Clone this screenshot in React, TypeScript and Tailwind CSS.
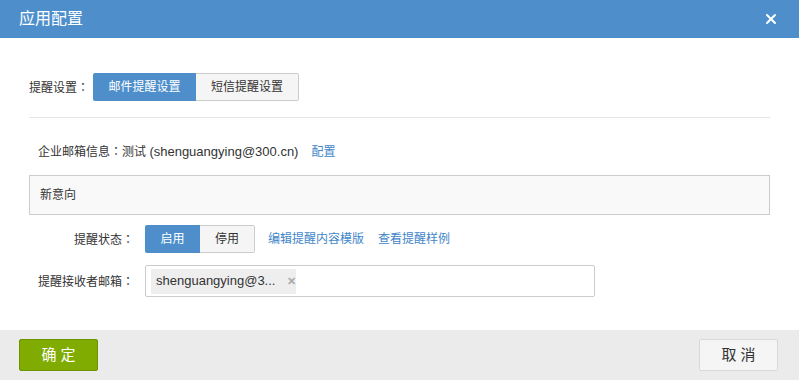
import { X } from "lucide-react";

const font = { fontFamily: '"Liberation Sans", "Noto Sans CJK SC", sans-serif' };

function Colon() {
  return <span style={{ fontFamily: '"Noto Sans CJK TC", sans-serif' }}>：</span>;
}

export default function App() {
  return (
    <div className="w-[799px] h-[380px] bg-white flex flex-col text-[12px] text-[#333]" style={font}>
      {/* Header */}
      <div className="h-[38px] bg-[#4e8fcb] flex items-center justify-between pl-[19px] pr-[20px]">
        <span className="text-white text-[16px]">应用配置</span>
        <X size={16} strokeWidth={3} className="text-white" />
      </div>

      {/* Body */}
      <div className="flex-1 px-[29px]">
        <div className="flex items-center h-[28px] mt-[35px]">
          <span className="w-[64px]">提醒设置<Colon /></span>
          <div className="flex">
            <button className="w-[103px] h-[28px] bg-[#4e8fcb] text-white rounded-l-[2px]">邮件提醒设置</button>
            <button className="w-[103px] h-[28px] bg-[#f5f5f5] border border-[#ccc] border-l-0 rounded-r-[2px]">短信提醒设置</button>
          </div>
        </div>
        <div className="h-px bg-[#e5e5e5] mt-[16px]" />

        <div className="flex items-center h-[20px] mt-[24px] pl-[9px]">
          <span>
            企业邮箱信息<Colon />测试 <span className="text-[13px]">(shenguangying@300.cn)</span>
          </span>
          <span className="ml-[13px] text-[#3f86c9]">配置</span>
        </div>

        <div className="mt-[13px] h-[40px] bg-[#f9f9f9] border border-[#ccc] flex items-center pl-[10px]">
          新意向
        </div>

        <div className="flex items-center h-[28px] mt-[10px]">
          <span className="w-[105px] text-right">提醒状态<Colon /></span>
          <div className="flex ml-[11px]">
            <button className="w-[55px] h-[28px] bg-[#4e8fcb] text-white rounded-l-[2px]">启用</button>
            <button className="w-[55px] h-[28px] bg-[#f5f5f5] border border-[#ccc] border-l-0 rounded-r-[2px]">停用</button>
          </div>
          <span className="ml-[13px] text-[#3f86c9]">编辑提醒内容模版</span>
          <span className="ml-[14px] text-[#3f86c9]">查看提醒样例</span>
        </div>

        <div className="flex items-center h-[32px] mt-[12px]">
          <span className="w-[105px] text-right">提醒接收者邮箱<Colon /></span>
          <div className="ml-[11px] w-[450px] h-[32px] border border-[#ccc] rounded-[2px] flex items-center pl-[5px]">
            <div className="h-[25px] w-[145px] bg-[#eee] flex items-center pl-[5px] gap-[12px]">
              <span className="text-[13px]">shenguangying@3...</span>
              <span className="text-[#aaa] text-[11px] font-bold">✕</span>
            </div>
          </div>
        </div>
      </div>

      {/* Footer */}
      <div className="h-[50px] bg-[#ebebeb] flex items-center justify-between pl-[19px] pr-[21px]">
        <button className="w-[79px] h-[32px] bg-[#80ac02] border border-[#6d9400] rounded-[2px] text-white text-[15px] tracking-[4px] pl-[4px]">确定</button>
        <button className="w-[79px] h-[32px] bg-[#f5f5f5] border border-[#d9d9d9] rounded-[2px] text-[#333] text-[15px] tracking-[4px] pl-[4px]">取消</button>
      </div>
    </div>
  );
}
